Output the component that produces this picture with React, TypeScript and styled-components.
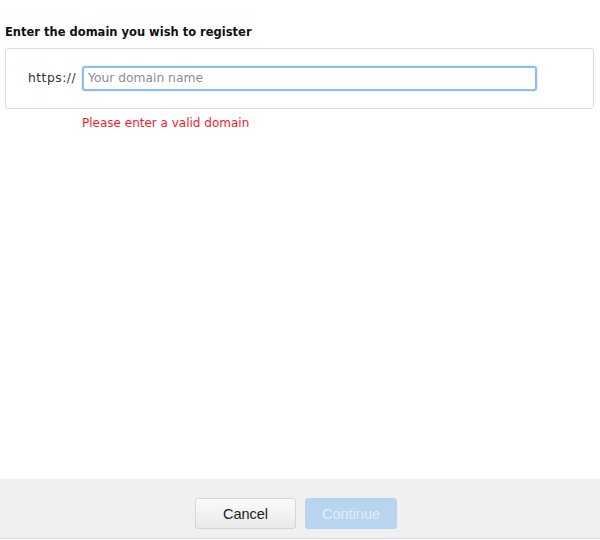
import React from "react";
import styled, { createGlobalStyle } from "styled-components";

const Global = createGlobalStyle`
  html, body { margin: 0; padding: 0; background: #fff; }
  body { width: 600px; height: 540px; overflow: hidden; }
`;

const Page = styled.div`
  width: 600px;
  height: 540px;
  display: flex;
  flex-direction: column;
  font-family: "DejaVu Sans", "Open Sans", sans-serif;
  color: #111;
`;

const Body = styled.div`
  flex: 1;
  padding: 24px 6px 0 5px;
`;

const Title = styled.h1`
  margin: 0 0 7px;
  font-size: 11.5px;
  font-weight: bold;
  line-height: 17px;
  color: #111;
`;

const Box = styled.div`
  height: 61px;
  border: 1px solid #dcdcdc;
  border-radius: 3px;
  display: flex;
  align-items: center;
  padding-left: 22px;
  padding-bottom: 1px;
  box-sizing: border-box;
`;

const Prefix = styled.span`
  font-size: 12.3px;
  letter-spacing: 0.5px;
  color: #333;
  width: 54px;
`;

const Input = styled.input`
  width: 455px;
  height: 25px;
  box-sizing: border-box;
  border: 2px solid #8fbdf0;
  border-radius: 3px;
  box-shadow: 0 0 2px #a9cdf6;
  outline: none;
  padding: 0 4px;
  font-family: "DejaVu Sans", sans-serif;
  font-size: 12.3px;
  color: #333;
  caret-color: #333;
  &::placeholder { color: #8e8e8e; }
`;

const Error = styled.div`
  margin: 7px 0 0 77px;
  color: #f51b2b;
  font-size: 12px;
  line-height: 14px;
`;

const Footer = styled.div`
  height: 60px;
  background: #f0f0f0;
  border-bottom: 1px solid #dadada;
  display: flex;
  justify-content: center;
  align-items: flex-start;
  padding: 19px 8px 0 0;
  box-sizing: border-box;
  gap: 9px;
  margin-bottom: 1px;
`;

const Button = styled.button<{ $primary?: boolean }>`
  height: 31px;
  width: ${(p) => (p.$primary ? "92px" : "101px")};
  border-radius: 3px;
  font-family: "Liberation Sans", Arial, sans-serif;
  font-size: 14.5px;
  border: 1px solid ${(p) => (p.$primary ? "#b6d3ec" : "#d6d6d6")};
  background: ${(p) =>
    p.$primary ? "#b7d5ee" : "linear-gradient(#fbfbfb, #e9e9e9)"};
  color: ${(p) => (p.$primary ? "#e4eef8" : "#222")};
  padding: 0;
`;

export default function App() {
  return (
    <Page>
      <Global />
      <Body>
        <Title>Enter the domain you wish to register</Title>
        <Box>
          <Prefix>https://</Prefix>
          <Input placeholder="Your domain name" autoFocus />
        </Box>
        <Error>Please enter a valid domain</Error>
      </Body>
      <Footer>
        <Button>Cancel</Button>
        <Button $primary disabled>Continue</Button>
      </Footer>
    </Page>
  );
}
